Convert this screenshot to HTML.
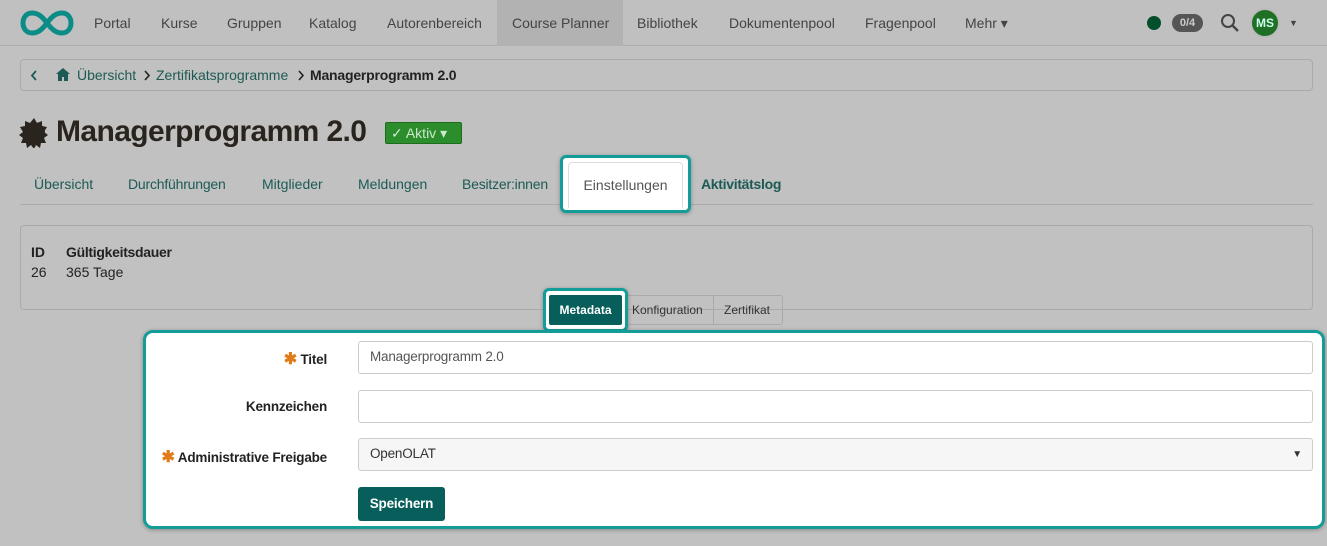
<!DOCTYPE html>
<html><head><meta charset="utf-8"><style>
*{box-sizing:border-box;margin:0;padding:0}
body{width:1327px;height:546px;background:#c1c1c1;font-family:"Liberation Sans",sans-serif;position:relative;overflow:hidden;color:#222}
.a{position:absolute}
.nav{left:0;top:0;width:1327px;height:46px;border-bottom:1px solid #aaa;background:#c0c0c0}
.nav span{position:absolute;top:15px;font-size:14px;color:#444}
.teal{color:#1d5a55}
.hl{border:3px solid #149c98;border-radius:6px;box-shadow:0 1px 4px rgba(0,0,0,.3)}
</style></head><body>
<div class="a nav">
<svg class="a" style="left:20px;top:10px" width="54" height="26" viewBox="0 0 54 26"><path d="M27 13C21 5 17 3 12 3 6 3 3 8 3 13s3 10 9 10c5 0 9-2 15-10 6-8 10-10 15-10 6 0 9 5 9 10s-3 10-9 10c-5 0-9-2-15-10z" fill="none" stroke="#0c8c86" stroke-width="5"/></svg>
<span style="left:94px">Portal</span><span style="left:161px">Kurse</span><span style="left:227px">Gruppen</span><span style="left:309px">Katalog</span><span style="left:387px">Autorenbereich</span>
<div class="a" style="left:497px;top:0;width:126px;height:46px;background:#b2b2b2"></div>
<span style="left:512px">Course Planner</span><span style="left:637px">Bibliothek</span><span style="left:729px">Dokumentenpool</span><span style="left:865px">Fragenpool</span><span style="left:965px">Mehr ▾</span>
<div class="a" style="left:1147px;top:16px;width:14px;height:14px;border-radius:50%;background:#034f2c"></div>
<div class="a" style="left:1172px;top:14px;width:31px;height:18px;border-radius:9px;background:#555;color:#ccc;font-size:11px;font-weight:bold;text-align:center;line-height:18px">0/4</div>
<svg class="a" style="left:1220px;top:13px" width="20" height="20"><circle cx="8" cy="8" r="6" fill="none" stroke="#444" stroke-width="2"/><path d="M12.5 12.5L18 18" stroke="#444" stroke-width="2.4"/></svg>
<div class="a" style="left:1250px;top:8px;width:30px;height:30px;border-radius:50%;background:#1f7025;border:2px solid #bbb;color:#cfe;font-size:12px;font-weight:bold;text-align:center;line-height:26px">MS</div>
<span style="left:1289px;font-size:9px;top:18px">▼</span>
</div>
<div class="a" style="left:20px;top:59px;width:1293px;height:32px;border:1px solid #aaa;border-radius:4px;font-size:14px;line-height:30px">
<svg class="a" style="left:9px;top:10px" width="8" height="11"><path d="M6 1L2 5.5 6 10" fill="none" stroke="#1d5a55" stroke-width="1.8"/></svg>
<svg class="a" style="left:35px;top:8px" width="14" height="13" viewBox="0 0 14 13"><path d="M7 0L0 6h2v7h4V9h2v4h4V6h2z" fill="#1d5a55"/></svg>
<span class="a teal" style="left:56px">Übersicht</span>
<svg class="a" style="left:122px;top:10px" width="8" height="11"><path d="M2 1l4 4.5L2 10" fill="none" stroke="#222" stroke-width="1.6"/></svg>
<span class="a teal" style="left:135px">Zertifikatsprogramme</span>
<svg class="a" style="left:276px;top:10px" width="8" height="11"><path d="M2 1l4 4.5L2 10" fill="none" stroke="#222" stroke-width="1.6"/></svg>
<b class="a" style="left:289px;font-size:14px;letter-spacing:-0.2px">Managerprogramm 2.0</b></div>
<svg class="a" style="left:19px;top:118px" width="30" height="30" viewBox="0 0 30 30"><g fill="#2a241e"><circle cx="15" cy="15" r="11"/><path d="M15 0l3 5 5-2 0 5 5 1-3 5 4 3-4 3 2 5-5 0-1 5-4-3-2 4-3-4-4 3-1-5-5 0 2-5-4-3 4-3-3-5 5-1 0-5 5 2z"/></g></svg>
<div class="a" style="left:56px;top:115px;font-size:30px;font-weight:bold;color:#2a241e;letter-spacing:-0.6px">Managerprogramm 2.0</div>
<div class="a" style="left:385px;top:122px;width:77px;height:22px;background:#2b8d2b;border:1px solid #1d6d1d;border-radius:2px;color:#cfe8cf;font-size:14px;line-height:20px;padding-left:5px">✓ Aktiv ▾</div>
<div class="a teal" style="top:176px;left:34px;font-size:14px">Übersicht</div>
<div class="a teal" style="top:176px;left:128px;font-size:14px;letter-spacing:-0.2px">Durchführungen</div>
<div class="a teal" style="top:176px;left:262px;font-size:14px">Mitglieder</div>
<div class="a teal" style="top:176px;left:358px;font-size:14px">Meldungen</div>
<div class="a teal" style="top:176px;left:462px;font-size:14px;letter-spacing:-0.2px">Besitzer:innen</div>
<div class="a teal" style="top:176px;left:701px;font-size:14px;font-weight:bold;letter-spacing:-0.3px">Aktivitätslog</div>
<div class="a" style="left:20px;top:204px;width:1293px;height:1px;background:#aaa"></div>
<div class="a hl" style="left:560px;top:155px;width:131px;height:58px;background:#fff"><div class="a" style="left:5px;top:4px;width:115px;height:46px;border:1px solid #ddd;border-bottom:none;border-radius:4px 4px 0 0;font-size:14px;color:#555;text-align:center;line-height:44px">Einstellungen</div></div>
<div class="a" style="left:20px;top:225px;width:1293px;height:85px;border:1px solid #aaa;border-radius:4px;font-size:14px">
<b class="a" style="left:10px;top:18px">ID</b><b class="a" style="left:45px;top:18px;letter-spacing:-0.3px">Gültigkeitsdauer</b>
<span class="a" style="left:10px;top:38px">26</span><span class="a" style="left:45px;top:38px">365 Tage</span></div>
<div class="a" style="left:621px;top:295px;width:162px;height:30px;border:1px solid #aaa;border-radius:0 3px 3px 0;font-size:12px;line-height:28px;color:#333"><span class="a" style="left:10px">Konfiguration</span><div class="a" style="left:91px;top:0;width:1px;height:28px;background:#aaa"></div><span class="a" style="left:102px">Zertifikat</span></div>
<div class="a hl" style="left:543px;top:288px;width:85px;height:44px;background:#fff"><div class="a" style="left:3px;top:4px;width:73px;height:30px;background:#075e5a;border-radius:2px;color:#fff;font-size:12px;font-weight:bold;text-align:center;line-height:30px">Metadata</div></div>
<div class="a" style="left:143px;top:330px;width:1182px;height:199px;background:#fff;border:3px solid #149c98;border-radius:10px;box-shadow:0 1px 4px rgba(0,0,0,.3);font-size:13.5px;letter-spacing:-0.2px">
<div class="a" style="right:995px;top:16px;font-weight:bold"><span style="color:#e07b17;font-size:16px">✱</span> Titel</div>
<div class="a" style="right:995px;top:66px;font-weight:bold">Kennzeichen</div>
<div class="a" style="right:995px;top:114px;font-weight:bold"><span style="color:#e07b17;font-size:16px">✱</span> Administrative Freigabe</div>
<div class="a" style="left:212px;top:8px;width:955px;height:33px;border:1px solid #ccc;border-radius:3px;padding:7px 11px;color:#555">Managerprogramm 2.0</div>
<div class="a" style="left:212px;top:57px;width:955px;height:33px;border:1px solid #ccc;border-radius:3px"></div>
<div class="a" style="left:212px;top:105px;width:955px;height:33px;border:1px solid #ccc;border-radius:3px;background:#f6f6f6;padding:7px 11px;color:#333">OpenOLAT<span class="a" style="right:10px;top:10px;font-size:10px">▼</span></div>
<div class="a" style="left:212px;top:154px;width:87px;height:34px;background:#075e5a;border-radius:3px;color:#fff;font-weight:bold;text-align:center;line-height:34px">Speichern</div>
</div>
</body></html>
